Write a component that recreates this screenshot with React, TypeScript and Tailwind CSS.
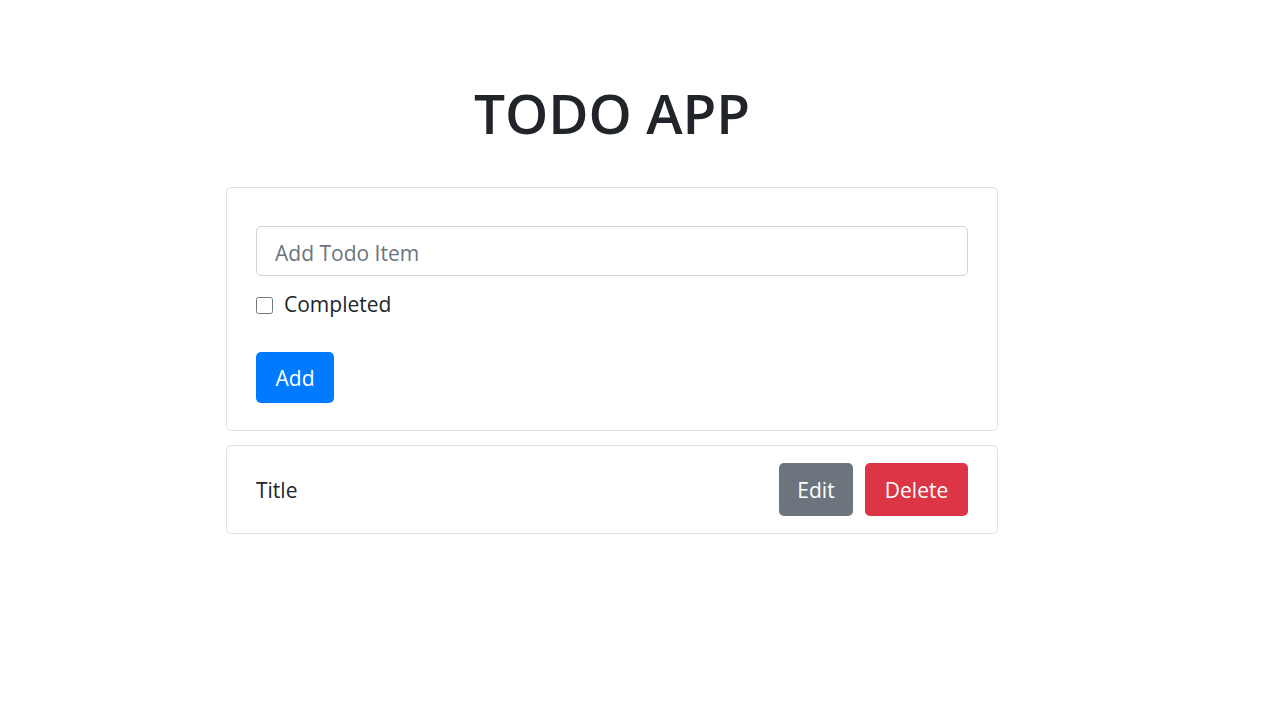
import React, { useState } from "react";

export default function App() {
  const [title, setTitle] = useState("");
  const [completed, setCompleted] = useState(false);

  return (
    <div className="min-h-[720px] bg-white text-[#212529] font-['Open_Sans','Noto_Sans',sans-serif]">
      <div className="ml-[226px] w-[772px] pt-[80px]">
        <h1 className="text-center text-[55px] leading-[66px] font-semibold mb-[41px]">
          TODO APP
        </h1>

        <div className="border border-[#dfe2e6] rounded-[5px] px-[29px] pt-[38px] pb-[27px]">
          <input
            value={title}
            onChange={(e) => setTitle(e.target.value)}
            className="block w-full h-[50px] px-[18px] pt-[3px] border border-[#ced4da] rounded-[5px] text-[21px] text-[#495057] placeholder:text-[#6c757d] outline-none"
            type="text"
            placeholder="Add Todo Item"
          />
          <label className="flex items-center mt-[14px] h-[30px]">
            <input
              type="checkbox"
              checked={completed}
              onChange={(e) => setCompleted(e.target.checked)}
              className="w-[17px] h-[17px] m-0 mr-[11px]"
            />
            <span className="text-[21px]">Completed</span>
          </label>
          <button className="mt-[32px] h-[51px] w-[78px] pt-[2px] rounded-[5px] bg-[#007bff] text-white text-[21px]">
            Add
          </button>
        </div>

        <div className="mt-[14px] border border-[#dfe2e6] rounded-[5px] h-[89px] px-[29px] flex items-center justify-between">
          <span className="text-[21px] pt-[2px]">Title</span>
          <div className="flex gap-[12px]">
            <button className="h-[53px] w-[74px] pt-[2px] rounded-[5px] bg-[#6c757d] text-white text-[21px]">Edit</button>
            <button className="h-[53px] w-[103px] pt-[2px] rounded-[5px] bg-[#dc3545] text-white text-[21px]">Delete</button>
          </div>
        </div>
      </div>
    </div>
  );
}
